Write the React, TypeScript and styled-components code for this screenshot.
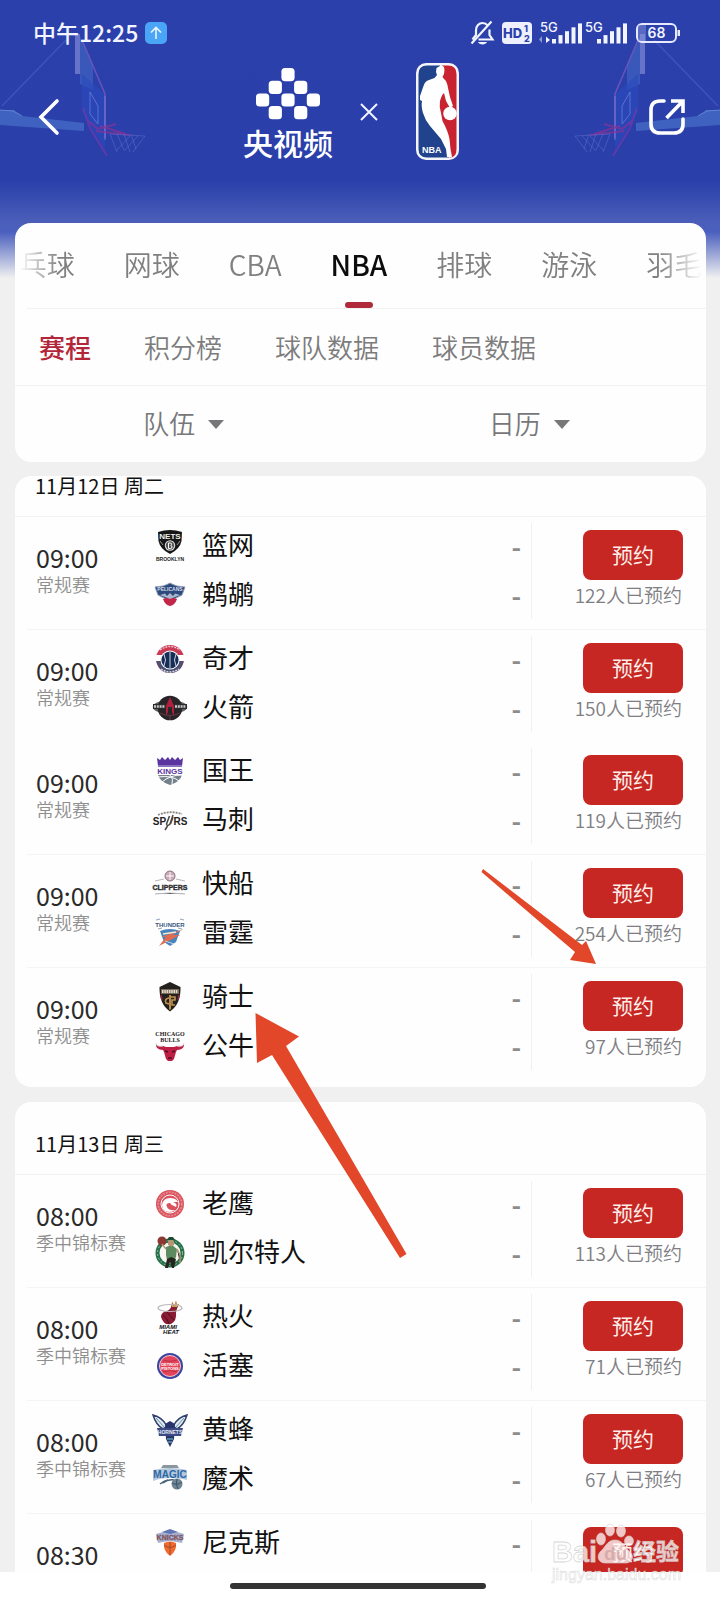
import React from 'react';
import styled, { createGlobalStyle } from 'styled-components';

const GlobalStyle = createGlobalStyle`
  * { box-sizing: border-box; }
  body {
    margin: 0;
    background: #ffffff;
    font-family: "Noto Sans CJK SC", "Noto Sans", sans-serif;
    color: #111111;
  }
  ul, h2, p { margin: 0; padding: 0; }
  ul { list-style: none; }
  button, select { font-family: inherit; }
`;

const Page = styled.div`
  position: relative;
  display: flex;
  flex-direction: column;
  height: 100vh;
  overflow: hidden;
`;

const Screen = styled.div`
  position: relative;
  flex: 1;
  min-height: 0;
  overflow: hidden;
  background:
    linear-gradient(#2b40ab 0, #2a3fa9 180px, #4a5eb9 222px, #4b60be 232px, #f0f0f0 278px) top / 100% 278px no-repeat,
    #f0f0f0;
`;

const Hoop = styled.svg<{ $side: 'left' | 'right' }>`
  position: absolute;
  top: 30px;
  ${(p) => p.$side}: 0;
  transform: ${(p) => (p.$side === 'right' ? 'scaleX(-1)' : 'none')};
  opacity: 0.8;
`;

const StatusBar = styled.div`
  position: relative;
  display: flex;
  align-items: center;
  justify-content: space-between;
  height: 63px;
  padding: 3px 40px 0 33px;
  color: #f2f4ff;
`;

const StatusGroup = styled.div`
  display: flex;
  align-items: center;
  gap: 7px;
`;

const Clock = styled.span`
  padding-bottom: 2px;
  font-size: 23px;
  font-weight: 500;
  line-height: 30px;
`;

const BrandBar = styled.header`
  position: relative;
  display: flex;
  align-items: center;
  justify-content: space-between;
  height: 97px;
  margin-bottom: 63px;
  padding: 0 35px;
`;

const IconButton = styled.button`
  display: block;
  margin-top: 11px;
  padding: 0;
  border: 0;
  background: none;
  line-height: 0;
  cursor: pointer;
`;

const Brands = styled.div`
  display: flex;
  align-items: center;
  gap: 27px;
  padding-right: 8px;
`;

const Channel = styled.div`
  display: flex;
  flex-direction: column;
  align-items: center;
  gap: 4px;
  padding-top: 4px;
  color: #ffffff;
  font-size: 30px;
  font-weight: 500;
  line-height: 36px;
`;

const LeagueMark = styled.svg`
  margin-left: 11px;
`;

const Card = styled.section<{ $bottom?: number }>`
  margin: 0 14px 15px 15px;
  padding-bottom: ${(p) => p.$bottom ?? 0}px;
  border-radius: 16px;
  background: #fefefe;
`;

const MenuCard = styled(Card)`
  position: relative;
  margin-bottom: 14px;
`;

const SportTabs = styled.nav`
  display: flex;
  justify-content: center;
  gap: 49px;
  height: 85px;
  overflow: hidden;
  mask-image: linear-gradient(90deg, transparent 4px, #000 44px, #000 calc(100% - 48px), transparent calc(100% - 4px));
`;

const Rule = styled.hr<{ $inset?: number }>`
  height: 1px;
  margin: 0 0 0 ${(p) => p.$inset ?? 0}px;
  border: 0;
  background: #f2f2f2;
`;

const SportTab = styled.a<{ $active: boolean }>`
  position: relative;
  flex: none;
  padding-top: 21px;
  color: ${(p) => (p.$active ? '#0c0c0c' : '#808080')};
  font-size: 28px;
  font-weight: ${(p) => (p.$active ? 500 : 350)};
  line-height: 40px;
  text-decoration: none;

  &::after {
    content: "";
    display: ${(p) => (p.$active ? 'block' : 'none')};
    position: absolute;
    bottom: 0;
    left: calc(50% - 14px);
    width: 28px;
    height: 6px;
    border-radius: 3px;
    background: #b02a3a;
  }
`;

const SectionTabs = styled.nav`
  display: flex;
  align-items: center;
  gap: 53px;
  height: 76px;
  padding: 0 24px;
`;

const SectionTab = styled.a<{ $active: boolean }>`
  color: ${(p) => (p.$active ? '#b3263a' : '#7c7c7c')};
  font-size: 26px;
  font-weight: ${(p) => (p.$active ? 500 : 350)};
  line-height: 36px;
  text-decoration: none;
`;

const Filters = styled.div`
  display: grid;
  grid-template-columns: 1fr 1fr;
  height: 76px;
`;

const Filter = styled.label`
  display: flex;
  align-items: center;
  justify-content: center;
  gap: 12px;
  padding-right: 8px;
`;

const FilterSelect = styled.select`
  appearance: none;
  padding: 0 0 2px;
  border: 0;
  background: none;
  color: #77777a;
  font-size: 26px;
  font-weight: 350;
  line-height: 36px;
`;

const DayTitle = styled.h2<{ $cut: boolean }>`
  padding: ${(p) => (p.$cut ? 0 : 32)}px 20px 20px;
  font-size: 20px;
  font-weight: 400;
  line-height: 20px;
`;

const Match = styled.li<{ $ruled: boolean }>`
  display: flex;
  height: ${(p) => (p.$ruled ? 113 : 112)}px;
  margin-left: 12px;
  padding: 0 23px 0 9px;
  border-bottom: ${(p) => (p.$ruled ? 1 : 0)}px solid #f4f4f4;
`;

const When = styled.div`
  flex: none;
  width: 116px;
  padding-top: 26px;
`;

const Time = styled.time`
  display: block;
  color: #2a2a2a;
  font-size: 25px;
  line-height: 28px;
`;

const Stage = styled.p`
  color: #8f8f8f;
  font-size: 18px;
  font-weight: 350;
  line-height: 26px;
`;

const Teams = styled.div`
  flex: 1;
  padding: 4px 10px 0 0;
`;

const Team = styled.div`
  display: flex;
  align-items: center;
  height: 49px;
`;

const TeamName = styled.span`
  flex: 1;
  margin-left: 14px;
  padding-bottom: 4px;
  font-size: 26px;
  line-height: 36px;
`;

const Score = styled.span`
  color: #8c8c8c;
  font-size: 26px;
  font-weight: 700;
  line-height: 36px;
`;

const Booking = styled.div`
  flex: none;
  display: flex;
  flex-direction: column;
  align-items: flex-end;
  width: 152px;
  margin: 6px 0 10px;
  padding-top: 7px;
  border-left: 1px solid #f0f0f0;
`;

const BookButton = styled.button`
  flex: none;
  width: 100px;
  height: 50px;
  padding: 0 0 2px;
  border: 0;
  border-radius: 8px;
  background: #c62722;
  color: #ffeeea;
  font-size: 21px;
  line-height: 28px;
  cursor: pointer;
`;

const Booked = styled.p`
  padding: 1px 1px 0 0;
  color: #7e7e84;
  font-size: 19px;
  font-weight: 350;
  line-height: 28px;
  white-space: nowrap;
`;

const HomeArea = styled.footer`
  flex: none;
  display: flex;
  justify-content: center;
  height: 28px;
  padding: 11px 4px 0 0;
  background: #ffffff;
`;

const HomeBar = styled.div`
  width: 256px;
  height: 6px;
  border-radius: 3px;
  background: #333333;
`;

const Arrow = styled.svg`
  position: absolute;
  pointer-events: none;
`;

const BigArrow = styled(Arrow)`
  top: 1012px;
  left: 254px;
`;

const SmallArrow = styled(Arrow)`
  top: 868px;
  right: 122px;
`;

const Watermark = styled.svg`
  position: absolute;
  right: 36px;
  bottom: 12px;
  pointer-events: none;
`;

function HoopArt({ side }: { side: 'left' | 'right' }) {
  return (
    <Hoop $side={side} width="150" height="132" viewBox="0 30 150 132" fill="none" aria-hidden="true">
      <path d="M2 106 66 40" stroke="#5a6bd0" strokeWidth="1.5" opacity=".55" />
      <path d="M0 110 14 110 22 116 84 123 84 131 0 125Z" fill="#4d79cf" opacity=".75" />
      <path d="M0 110 13 111 22 116" stroke="#7fa6e6" opacity=".7" />
      <path d="M75 34H80V74H75Z" fill="#8890da" opacity=".8" />
      <path d="M80 36 93 66 93 90 80 84Z" fill="#4a78cc" opacity=".55" />
      <path d="M82 74 105 94V150L82 112Z" fill="#2b4cc4" opacity=".6" />
      <path d="M82 40 105 94V138" stroke="#8d5fc4" strokeWidth="1.6" opacity=".75" />
      <path d="M105 96V140" stroke="#8a9ae6" opacity=".8" />
      <path d="M90 92 98 106V124L90 114Z" stroke="#8294e6" opacity=".7" />
      <path d="M83 108 90 128 107 156" stroke="#7a38ac" strokeWidth="2" opacity=".8" />
      <path d="M88 121 98 129 116 124M96 131 130 135M100 126 126 134" stroke="#a02f94" strokeWidth="2" opacity=".7" />
      <path d="M110 134 117 152M117 134 124 150M124 134 130 152M131 134 136 149M145 136 133 152M138 136 124 151M130 136 116 151M110 134 145 136" stroke="#6c80dc" opacity=".5" />
    </Hoop>
  );
}

function StatusIcons() {
  return (
    <svg width="210" height="28" viewBox="0 0 210 28" fill="none" aria-hidden="true">
      <g stroke="#f2f4ff" strokeWidth="2.2">
        <path d="M2.500 20.500 6 16V11.500C6 7 9 4 12.500 4 14.500 4 16.500 5 17.800 6.500M19.500 10.500V16L22.500 20.500H8.500" />
        <path d="M1.500 24.500 21.500 2.500" />
      </g>
      <path d="M8 23H17C16 26.300 9 26.300 8 23Z" fill="#f2f4ff" />
      <rect x="32" y="3" width="30" height="22" rx="4" fill="#eef0ff" />
      <g fontFamily="Inter, sans-serif" fontWeight="800" fill="#2b40ab">
        <text x="33" y="19" fontSize="13">HD</text>
        <text x="54" y="13" fontSize="9">1</text>
        <text x="54" y="23" fontSize="9">2</text>
      </g>
      <g fontFamily="Inter, sans-serif" fontWeight="500" fontSize="13" fill="#f2f4ff">
        <text x="70" y="13">5G</text>
        <text x="115" y="13">5G</text>
      </g>
      <g fill="#f2f4ff">
        <path d="M76 17.500 80 21 76 24Z" />
        <path d="M72 17V24L69 20.500Z" opacity=".5" />
        {[0, 1, 2, 3, 4].map((i) => (
          <rect key={i} x={82 + i * 6.500} y={20 - i * 3.900} width="4" height={4.500 + i * 3.900} />
        ))}
        {[0, 1, 2, 3, 4].map((i) => (
          <rect key={i} x={127 + i * 6.500} y={20 - i * 3.900} width="4" height={4.500 + i * 3.900} />
        ))}
      </g>
      <rect x="167" y="5" width="39" height="18" rx="5" stroke="#e6e9ff" strokeWidth="2" />
      <path d="M168 6H176V22H168Z" fill="#8a94dc" opacity=".5" />
      <rect x="207.500" y="11" width="2.500" height="6" fill="#e6e9ff" />
      <text x="186.500" y="19" textAnchor="middle" fontFamily="Inter, sans-serif" fontWeight="600" fontSize="14" fill="#f2f4ff">68</text>
    </svg>
  );
}

const TILES = [
  [2, 0], [1, 1], [3, 1], [0, 2], [2, 2], [4, 2], [1, 3], [3, 3],
];

function ChannelLogo() {
  return (
    <svg width="64" height="52" viewBox="0 0 64 52" fill="#fff" aria-hidden="true">
      {TILES.map(([c, r]) => (
        <rect key={`${c}-${r}`} x={c * 12.700} y={r * 12.700} width="13.200" height="13.200" rx="3.600" />
      ))}
    </svg>
  );
}

function LeagueLogo() {
  return (
    <LeagueMark width="43" height="97" viewBox="0 0 43 97" role="img" aria-label="NBA">
      <rect x="0" y="0" width="43" height="97" rx="10" fill="#f4f5fb" />
      <path d="M11 2.500H24L33 94.500H11Q2.500 94.500 2.500 86V11Q2.500 2.500 11 2.500Z" fill="#21428c" />
      <path d="M26 2.500H32Q40.500 2.500 40.500 11V86Q40.500 94.500 34 94.500L20 50Z" fill="#c8232f" />
      <path d="M24 3 20.500 5 20 9 21 12 18.500 15 13 17Q9 18 7.500 23L4 33V37L6 38Q5 43 7 50 9 57 14 63L25 76 30 86 31 94H36L34.500 86 33.500 76Q32 68 26.500 58L25 50Q23 44 24 38 26 31 28 30L30 38 34 45 37 43 34 34 32 25Q31 18 28 16L26.500 14Q28.500 11 28.500 7L28 4Q26 2 24 3Z" fill="#fff" />
      <circle cx="34" cy="50.500" r="6.800" fill="#fff" />
      <text x="6" y="90" fontFamily='"Liberation Sans", sans-serif' fontWeight="700" fontSize="9" fill="#fff">NBA</text>
    </LeagueMark>
  );
}

const LOGOS: Record<string, React.ReactNode> = {
  篮网: (
    <>
      <path d="M6 4Q12 2 18 2 24 2 30 4L29.500 13Q28 21 18 26 8 21 6.500 13Z" fill="#161616" />
      <path d="M8 13 11 17M28 13 25 17" stroke="#999" />
      <text x="18" y="11" textAnchor="middle" fontSize="8" fontWeight="700" fill="#eee">NETS</text>
      <circle cx="18" cy="17.500" r="5.200" fill="#e5e5e5" />
      <circle cx="18" cy="17.500" r="4.200" fill="#555" />
      <path d="M16.500 15V20.500H18.500Q20 20.500 20 19 20 18 18.800 17.700 19.600 17.200 19.600 16.300 19.600 15 18.300 15Z" fill="none" stroke="#fff" />
      <text x="18" y="33" textAnchor="middle" fontSize="5" fontWeight="700" fill="#222">BROOKLYN</text>
    </>
  ),
  鹈鹕: (
    <>
      <path d="M3 10 11 9 15 7.500 18 6 21 7.500 25 9 33 10 30 18 24 21 18 24 12 21 6 18Z" fill="#2c4a7c" stroke="#8d9bb5" />
      <path d="M11 22Q18 19 25 22 23 28 18 29 13 28 11 22Z" fill="#c22748" />
      <path d="M8 18 13 16.500 15 19 18 16 21 19 23 16.500 28 18 18 22Z" fill="#a9b6cc" />
      <text x="18" y="14" textAnchor="middle" fontSize="5" fontWeight="700" fill="#d5dceb">PELICANS</text>
    </>
  ),
  奇才: (
    <>
      <circle cx="18" cy="18" r="14" fill="#c93a54" />
      <path d="M4 14H32V20H4Z" fill="#fff" />
      <path d="M4.500 20H31.500Q29 32 18 32 7 32 4.500 20Z" fill="#4c5274" />
      <circle cx="18" cy="19" r="9.500" fill="#fff" />
      <circle cx="18" cy="19" r="8.600" fill="#152d57" />
      <path d="M18 11V27M12 13Q15 19 12 25M24 13Q21 19 24 25" stroke="#fff" strokeWidth=".8" fill="none" />
      <path d="M8 9Q18 2 28 9" stroke="#f2c4cc" strokeWidth="1.500" strokeDasharray="2 1" fill="none" />
      <path d="M9 28Q18 34 27 28" stroke="#d5d8e2" strokeWidth="1.500" strokeDasharray="2 1" fill="none" />
    </>
  ),
  火箭: (
    <>
      <ellipse cx="18" cy="17" rx="16" ry="5.500" fill="none" stroke="#5f5f63" strokeWidth="2.500" />
      <circle cx="18" cy="18" r="12.300" fill="#262427" />
      <path d="M1 14H35V19H1Z" fill="#2c2c2f" />
      <path d="M14 26V16L18 7 22 16V26L20 22V17H16V22Z" fill="#b01f3c" />
      <path d="M8 23Q18 28 28 23M18 26V30" stroke="#6b3340" fill="none" />
      <path d="M2 16.500H13M23 16.500H34" stroke="#c9c9c9" strokeWidth="2.500" strokeDasharray="2 .8" />
    </>
  ),
  国王: (
    <>
      <path d="M5 5 8 7 10 4 13 7 16 4 18 7 20 4 23 7 26 4 28 7 31 5 30 13H6Z" fill="#5a35a0" />
      <path d="M6 12H30V14H6Z" fill="#8a73bd" />
      <text x="18" y="20.500" textAnchor="middle" fontSize="8" fontWeight="700" fill="#5a35a0">KINGS</text>
      <path d="M6 22H30Q28 29 18 32 8 29 6 22Z" fill="#75818a" />
      <path d="M6 24Q20 22 27 28M10 29Q18 22 30 22M18 22Q22 26 20 31" stroke="#fff" fill="none" />
    </>
  ),
  马刺: (
    <>
      <text x="7.500" y="23" textAnchor="middle" fontSize="10" fontWeight="700" fill="#26221e">SP</text>
      <text x="28.500" y="23" textAnchor="middle" fontSize="10" fontWeight="700" fill="#26221e">RS</text>
      <path d="M17.500 14 14.500 22Q15 25 18 22L21 13M21 15 18.500 22M15.500 24 13 28" stroke="#4b4640" strokeWidth="1.500" fill="none" />
      <path d="M6 13Q18 8 30 12" stroke="#8c8780" strokeWidth="1.800" strokeDasharray="2 1" fill="none" />
    </>
  ),
  快船: (
    <>
      <circle cx="18" cy="10" r="5" fill="#c9aab6" stroke="#8f7383" />
      <path d="M14 10H22M18 6V14" stroke="#fff" />
      <path d="M3 15 12 13M24 13 33 15M3 28 18 27 33 28" stroke="#b7b7bc" />
      <text x="18" y="24" textAnchor="middle" fontSize="7" fontWeight="700" fill="#2e2e31" stroke="#2e2e31" strokeWidth=".4">CLIPPERS</text>
    </>
  ),
  雷霆: (
    <>
      <text x="18" y="12" textAnchor="middle" fontSize="6" fontWeight="700" fill="#36567f">THUNDER</text>
      <path d="M4 5 8 4M28 4 32 5M6 14 10 13M26 13 30 14" stroke="#8fa3bd" />
      <path d="M8 16Q18 12 28 16L24 27 18 31 12 27Z" fill="#4a84bd" />
      <path d="M32 14 20 20 28 20 7 31 14 22 9 22Z" fill="#e16b4e" />
      <path d="M11 19 24 17" stroke="#f7e9d7" strokeWidth="1.500" />
      <path d="M13 26 22 29" stroke="#c2d3e6" />
    </>
  ),
  骑士: (
    <>
      <path d="M7.500 8 18 3 28.500 8Q29 25 18 32.500 7 25 7.500 8Z" fill="#23201e" />
      <path d="M9 10H27V15H9Z" fill="#77695b" />
      <path d="M10 12.500H26" stroke="#e6dccb" strokeWidth="3" strokeDasharray="1.500 .8" />
      <path d="M17 16V30L18 31 19 30V16Z" fill="#b98a4a" />
      <path d="M17 19Q12 20 14 24L17 25M19 18H23V21H20V26H23" stroke="#c0934f" strokeWidth="1.600" fill="none" />
      <path d="M9 16 10 21M27 16 26 21" stroke="#8f2541" strokeWidth="1.500" />
    </>
  ),
  公牛: (
    <>
      <g fontFamily='"Liberation Serif", serif' fontWeight="700" fill="#1d1719" textAnchor="middle">
        <text x="18" y="8" fontSize="6">CHICAGO</text>
        <text x="18" y="14" fontSize="6">BULLS</text>
      </g>
      <path d="M4 15Q4 19 11 18L14 19H22L25 18Q32 19 32 15 33 22 25 22L24 24 22 31 20 33H16L14 31 12 24 11 22Q3 22 4 15Z" fill="#c01f45" />
      <path d="M4 15Q4 19 11 18M32 15Q32 19 25 18" stroke="#ddd" fill="none" />
      <path d="M13 23 16 24M23 23 20 24M16 30H20" stroke="#4d1020" strokeWidth="1.500" />
    </>
  ),
  老鹰: (
    <>
      <circle cx="18" cy="18" r="14" fill="#d9525c" />
      <circle cx="18" cy="18" r="11.800" fill="none" stroke="#e58a91" strokeWidth="1.800" strokeDasharray="2 1" />
      <circle cx="18" cy="18" r="9" fill="#d9525c" stroke="#fff" />
      <path d="M10 19Q11 12 18 12 24 12 26 16L21 16Q26 18 24 21L22 20Q19 19 18 17 13 17 15 21 17 25 24 24 17 28 12 24 10 22 10 19Z" fill="#fff" />
    </>
  ),
  凯尔特人: (
    <>
      <circle cx="18" cy="18" r="12.500" fill="#f7f8f4" stroke="#26714a" strokeWidth="4" />
      <circle cx="18" cy="18" r="12.500" fill="none" stroke="#8fb79f" strokeDasharray="2 2" />
      <circle cx="10" cy="6" r="4.500" fill="#8c3732" />
      <path d="M14 12 20 10 25 14 24 22 22 25 15 25 14 20Z" fill="#5d8a5f" />
      <circle cx="19" cy="8" r="3.200" fill="#b99471" />
      <path d="M15 5H23L21 2H17Z" fill="#1f4a33" />
      <path d="M15 24 19 22 24 24 22 33H20L18 27 16 33H13Z" fill="#25271f" />
      <path d="M10 9 14 14M25 14 28 20V28" stroke="#b99471" strokeWidth="1.500" />
    </>
  ),
  热火: (
    <>
      <path d="M9 18Q9 13 15 12 20 10 20 3 22 5 22 7L24 2 25 6 27 5Q25 9 24 13 25 22 19 25 12 27 9 18Z" fill="#8a1c34" />
      <path d="M20 3 22 7 24 2 25 6 27 5 25 8H20Z" fill="#d0a04c" />
      <ellipse cx="18" cy="9" rx="12" ry="3.500" fill="none" stroke="#bcb6b8" strokeWidth="1.200" />
      <path d="M11 16Q16 20 17 25M15 13Q19 18 22 21" stroke="#4d1020" fill="none" />
      <g fontStyle="italic" fontWeight="700" fill="#111" textAnchor="middle">
        <text x="16" y="30" fontSize="6">MIAMI</text>
        <text x="19" y="35" fontSize="6">HEAT</text>
      </g>
    </>
  ),
  活塞: (
    <>
      <circle cx="18" cy="18" r="13" fill="#3c44a0" />
      <circle cx="18" cy="18" r="10.500" fill="#e24358" stroke="#f3c9d0" />
      <path d="M11 12Q18 15 25 12M11 24Q18 21 25 24" stroke="#bf2f49" fill="none" />
      <g fontWeight="700" fill="#fff" textAnchor="middle" fontSize="4">
        <text x="18" y="17.500">DETROIT</text>
        <text x="18" y="21.500">PISTONS</text>
      </g>
    </>
  ),
  黄蜂: (
    <>
      <path d="M1 3Q10 5 15 14L11 17Q4 13 1 3ZM35 3Q26 5 21 14L25 17Q32 13 35 3Z" fill="#e2e8ee" stroke="#32406f" strokeWidth="1.500" />
      <path d="M4 6 12 15M32 6 24 15" stroke="#5c9aa8" />
      <path d="M13 12 18 9 23 12 22 27 18 35 14 27Z" fill="#28356c" />
      <path d="M5 16H31L29 24H7Z" fill="#3c4a86" />
      <text x="18" y="22" textAnchor="middle" fontSize="5" fontWeight="700" fill="#e6eaf5">HORNETS</text>
      <path d="M15 27H21M16 30H20" stroke="#5c9aa8" strokeWidth="1.500" />
    </>
  ),
  魔术: (
    <>
      <path d="M11 4H25L27 7H9Z" fill="#8b979f" />
      <path d="M1 9Q18 5 35 9V19Q28 17 18 17 8 17 1 20Z" fill="#b4c9dc" />
      <text x="18" y="17" textAnchor="middle" fontSize="10" fontWeight="700" fill="#2c67a5">MAGIC</text>
      <path d="M11 22Q16 18 22 19M8 23Q12 20 16 19" stroke="#456079" strokeWidth="1.500" fill="none" />
      <circle cx="25" cy="23" r="5.500" fill="#6f8795" />
      <path d="M20 22Q25 25 30 21M25 18Q23 23 26 28" stroke="#3c5262" fill="none" />
    </>
  ),
  尼克斯: (
    <>
      <path d="M4 9 18 5 32 9 30 18 25 17 18 16 11 17 6 18Z" fill="#a9b1cd" />
      <path d="M10 7 18 4 26 7 18 9Z" fill="#5f75b4" />
      <text x="18" y="15" textAnchor="middle" fontSize="7" fontWeight="700" fill="#b5502e" stroke="#4d5a95" strokeWidth=".3">KNICKS</text>
      <path d="M12 18Q18 15 24 18 25 26 18 31 11 26 12 18Z" fill="#ee6a30" />
      <path d="M12 20Q18 25 24 20M18 17V30" stroke="#a34a29" fill="none" />
    </>
  ),
};

function TeamLogo({ name }: { name: string }) {
  return (
    <svg width="36" height="36" viewBox="0 0 36 36" fontFamily='"Liberation Sans", sans-serif' aria-hidden="true">
      {LOGOS[name]}
    </svg>
  );
}

type Game = { time: string; stage: string; teams: string[]; booked: number; ruled?: boolean };
type Day = { title: string; cut?: boolean; games: Game[] };

const DAYS: Day[] = [
  {
    title: '11月12日 周二',
    cut: true,
    games: [
      { time: '09:00', stage: '常规赛', teams: ['篮网', '鹈鹕'], booked: 122, ruled: true },
      { time: '09:00', stage: '常规赛', teams: ['奇才', '火箭'], booked: 150 },
      { time: '09:00', stage: '常规赛', teams: ['国王', '马刺'], booked: 119, ruled: true },
      { time: '09:00', stage: '常规赛', teams: ['快船', '雷霆'], booked: 254, ruled: true },
      { time: '09:00', stage: '常规赛', teams: ['骑士', '公牛'], booked: 97 },
    ],
  },
  {
    title: '11月13日 周三',
    games: [
      { time: '08:00', stage: '季中锦标赛', teams: ['老鹰', '凯尔特人'], booked: 113, ruled: true },
      { time: '08:00', stage: '季中锦标赛', teams: ['热火', '活塞'], booked: 71, ruled: true },
      { time: '08:00', stage: '季中锦标赛', teams: ['黄蜂', '魔术'], booked: 67, ruled: true },
      { time: '08:30', stage: '', teams: ['尼克斯'], booked: 0 },
    ],
  },
];

function MatchRow({ game }: { game: Game }) {
  return (
    <Match $ruled={!!game.ruled}>
      <When>
        <Time>{game.time}</Time>
        {game.stage && <Stage>{game.stage}</Stage>}
      </When>
      <Teams>
        {game.teams.map((name) => (
          <Team key={name}>
            <TeamLogo name={name} />
            <TeamName>{name}</TeamName>
            <Score>-</Score>
          </Team>
        ))}
      </Teams>
      <Booking>
        <BookButton type="button">预约</BookButton>
        {game.booked > 0 && <Booked>{game.booked}人已预约</Booked>}
      </Booking>
    </Match>
  );
}

const SPORTS = ['乒乓球', '网球', 'CBA', 'NBA', '排球', '游泳', '羽毛球'];
const SECTIONS = ['赛程', '积分榜', '球队数据', '球员数据'];
const FILTERS = ['队伍', '日历'];

export default function App() {
  return (
    <Page>
      <GlobalStyle />
      <Screen>
        <HoopArt side="left" />
        <HoopArt side="right" />
        <StatusBar>
          <StatusGroup>
            <Clock>中午12:25</Clock>
            <svg width="22" height="22" viewBox="0 0 22 22" fill="none" aria-hidden="true">
              <rect width="22" height="22" rx="5" fill="#4aa5f7" />
              <path d="M11 17V5.500M6 10.500 11 5.500 16 10.500" stroke="#e9f6ff" strokeWidth="1.600" />
            </svg>
          </StatusGroup>
          <StatusIcons />
        </StatusBar>
        <BrandBar>
          <IconButton type="button" aria-label="返回">
            <svg width="26" height="38" viewBox="0 0 26 38" fill="none" stroke="#fff" strokeWidth="3.600" strokeLinecap="round">
              <path d="M22 3 6 19 22 35" />
            </svg>
          </IconButton>
          <Brands>
            <Channel>
              <ChannelLogo />
              央视频
            </Channel>
            <svg width="18" height="18" viewBox="0 0 18 18" stroke="#f2f4ff" strokeWidth="2" aria-hidden="true">
              <path d="M1 1 17 17M17 1 1 17" />
            </svg>
            <LeagueLogo />
          </Brands>
          <IconButton type="button" aria-label="分享">
            <svg width="36" height="36" viewBox="0 0 36 36" fill="none" stroke="#fff" strokeWidth="3.600">
              <path d="M15 2H11Q2 2 2 11V25Q2 34 11 34H25Q34 34 34 25V20" strokeLinecap="round" />
              <path d="M17.500 19 34 2M22 2H34V14" />
            </svg>
          </IconButton>
        </BrandBar>

        <MenuCard>
          <SportTabs>
            {SPORTS.map((s) => (
              <SportTab key={s} href="#" $active={s === 'NBA'}>{s}</SportTab>
            ))}
          </SportTabs>
          <Rule $inset={12} />
          <SectionTabs>
            {SECTIONS.map((s, i) => (
              <SectionTab key={s} href="#" $active={i === 0}>{s}</SectionTab>
            ))}
          </SectionTabs>
          <Rule />
          <Filters>
            {FILTERS.map((f) => (
              <Filter key={f}>
                <FilterSelect aria-label={f}>
                  <option>{f}</option>
                </FilterSelect>
                <svg width="16" height="9" viewBox="0 0 16 9" fill="#77777a" aria-hidden="true">
                  <path d="M0 0H16L8 9Z" />
                </svg>
              </Filter>
            ))}
          </Filters>
        </MenuCard>

        {DAYS.map((day) => (
          <Card key={day.title} $bottom={7}>
            <DayTitle $cut={!!day.cut}>{day.title}</DayTitle>
            <Rule />
            <ul>
              {day.games.map((game) => (
                <MatchRow key={game.teams[0]} game={game} />
              ))}
            </ul>
          </Card>
        ))}

        <BigArrow width="154" height="248" viewBox="254 1012 154 248" fill="#e24729" aria-hidden="true">
          <path d="M255.500 1013 299 1036.500 286 1046 406.500 1254 400 1258 272 1055 257 1063Z" />
        </BigArrow>
        <SmallArrow width="118" height="98" viewBox="481 868 118 98" fill="#e24729" aria-hidden="true">
          <path d="M484 869 583 945 587 941 597 964 571 960 576 952 482.500 872Z" />
        </SmallArrow>
      </Screen>
      <HomeArea>
        <HomeBar />
      </HomeArea>
      <Watermark width="134" height="66" viewBox="0 0 134 66" aria-hidden="true">
        <g fill="#fff" fillOpacity=".75" stroke="#cfcfcf" strokeOpacity=".8" strokeWidth=".8" fontFamily='"Liberation Sans", sans-serif'>
          <text x="2" y="40" fontSize="29" fontWeight="700">Bai</text>
          <ellipse cx="51" cy="17" rx="4.500" ry="6" />
          <ellipse cx="60" cy="8" rx="4.500" ry="6" />
          <ellipse cx="71" cy="9" rx="4.500" ry="6" />
          <ellipse cx="79" cy="19" rx="4.500" ry="5" />
          <path d="M65 18C57 18 55 26 50 30 46 35 49 41 55 41H76C82 41 85 34 80 30 75 26 73 18 65 18Z" />
          <text x="54" y="38" fontSize="19" fontWeight="700" fill="#c9a09e" fillOpacity=".7" stroke="none">du</text>
          <text x="83" y="38" fontSize="23" fontWeight="700" fontFamily='"Noto Sans CJK SC", sans-serif'>经验</text>
          <text x="2" y="58" fontSize="16" strokeWidth=".5">jingyan.baidu.com</text>
        </g>
      </Watermark>
    </Page>
  );
}
